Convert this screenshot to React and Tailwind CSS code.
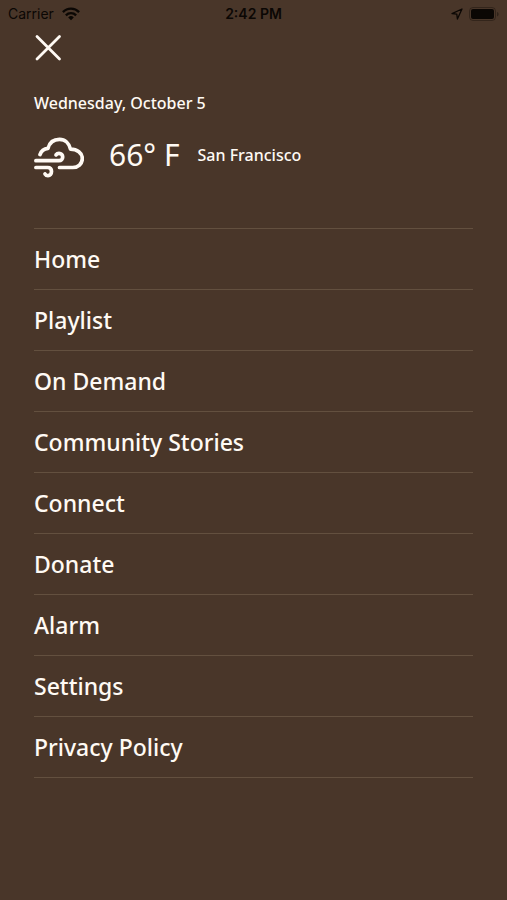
const MENU_ITEMS = [
  { label: "Home", href: "#home" },
  { label: "Playlist", href: "#playlist" },
  { label: "On Demand", href: "#on-demand" },
  { label: "Community Stories", href: "#community-stories" },
  { label: "Connect", href: "#connect" },
  { label: "Donate", href: "#donate" },
  { label: "Alarm", href: "#alarm" },
  { label: "Settings", href: "#settings" },
  { label: "Privacy Policy", href: "#privacy-policy" },
];

function WifiIcon() {
  return (
    <svg width="18" height="14" viewBox="0 0 20 15" fill="none" stroke="currentColor" strokeWidth="2.6" aria-hidden="true">
      <path d="M1 5.4a12.5 12.5 0 0 1 18 0" />
      <path d="M4.3 9a8 8 0 0 1 11.4 0" />
      <path d="M10 14.4 6.9 11.3a4.4 4.4 0 0 1 6.2 0Z" fill="currentColor" stroke="none" />
    </svg>
  );
}

function LocationIcon() {
  return (
    <svg width="12" height="12" viewBox="0 0 12 12" fill="none" stroke="currentColor" strokeWidth="1.3" strokeLinejoin="round" aria-hidden="true">
      <path d="M11 1 1 5.6l4.8.6.6 4.8Z" />
    </svg>
  );
}

function BatteryIcon() {
  return (
    <svg width="30" height="14" viewBox="0 0 30 14" aria-hidden="true">
      <rect x="0.5" y="0.5" width="26" height="13" rx="3.5" fill="none" stroke="currentColor" strokeOpacity="0.35" />
      <rect x="2" y="2" width="23" height="10" rx="2" fill="currentColor" />
      <path d="M28 5v4.4c1-.4 1.6-1.2 1.6-2.2S29 5.4 28 5Z" fill="currentColor" fillOpacity="0.4" />
    </svg>
  );
}

function StatusBar() {
  return (
    <div className="grid h-7 grid-cols-3 items-center px-2 font-['Inter','Liberation_Sans',sans-serif] text-sm text-[#0b0704]">
      <div className="flex items-center gap-2">
        <span>Carrier</span>
        <WifiIcon />
      </div>
      <div className="text-center font-semibold">2:42 PM</div>
      <div className="flex items-center justify-end gap-1.5">
        <LocationIcon />
        <BatteryIcon />
      </div>
    </div>
  );
}

// Cloud with two gusts of wind blowing out of its left side
function WindyIcon() {
  return (
    <svg width="50" height="42" viewBox="0 0 50 42" fill="none" stroke="currentColor" strokeWidth="3.7" strokeLinecap="round" strokeLinejoin="round" role="img" aria-label="Windy">
      <path d="M6 18.6C7.2 15 10.2 12.8 14 12.4 15.500 6.600 20 3.400 25.500 3.400c5.500 0 9.700 3.700 11 9.800 6.600.1 11.800 3.800 11.800 9.300 0 5.400-4.300 9-9.600 9H25.500" />
      <path d="M1.900 24.700h23c2.300 0 3.800-1.600 3.800-3.700s-1.500-3.600-3.700-3.600c-1.300 0-2.300.5-3 1.500" />
      <path d="M1.900 31.500h11.700c2.400 0 3.900 1.600 3.900 4s-1.500 4.100-3.500 4.100c-1.300 0-2.300-.6-3-1.700" />
    </svg>
  );
}

export default function App() {
  return (
    <div className="min-h-screen bg-[#493629] font-['Noto_Sans','Open_Sans',sans-serif] text-[#fffaf4]">
      <StatusBar />

      <div className="px-[34px]">
        <header>
          <button type="button" aria-label="Close menu" className="block py-1">
            <svg width="28" height="30" viewBox="0 0 28 30" stroke="currentColor" strokeWidth="2.8" strokeLinecap="round" aria-hidden="true">
              <path d="M3 4.5 25.5 27M25.5 4.5 3 27" />
            </svg>
          </button>

          <p className="mt-[25px] text-base leading-6 font-medium">Wednesday, October 5</p>

          <div className="mt-5 flex items-center">
            <WindyIcon />
            <span className="mb-1 ml-[25px] text-[30px] leading-10">66° F</span>
            <span className="mb-1 ml-[18px] text-base leading-6 font-medium">San Francisco</span>
          </div>
        </header>

        <nav aria-label="Main" className="mt-[49px]">
          <ul className="border-t border-[#63503f]">
            {MENU_ITEMS.map((item) => (
              <li key={item.label} className="border-b border-[#63503f]">
                <a href={item.href} className="block py-3 text-[23px] leading-9 font-medium">
                  {item.label}
                </a>
              </li>
            ))}
          </ul>
        </nav>
      </div>
    </div>
  );
}
